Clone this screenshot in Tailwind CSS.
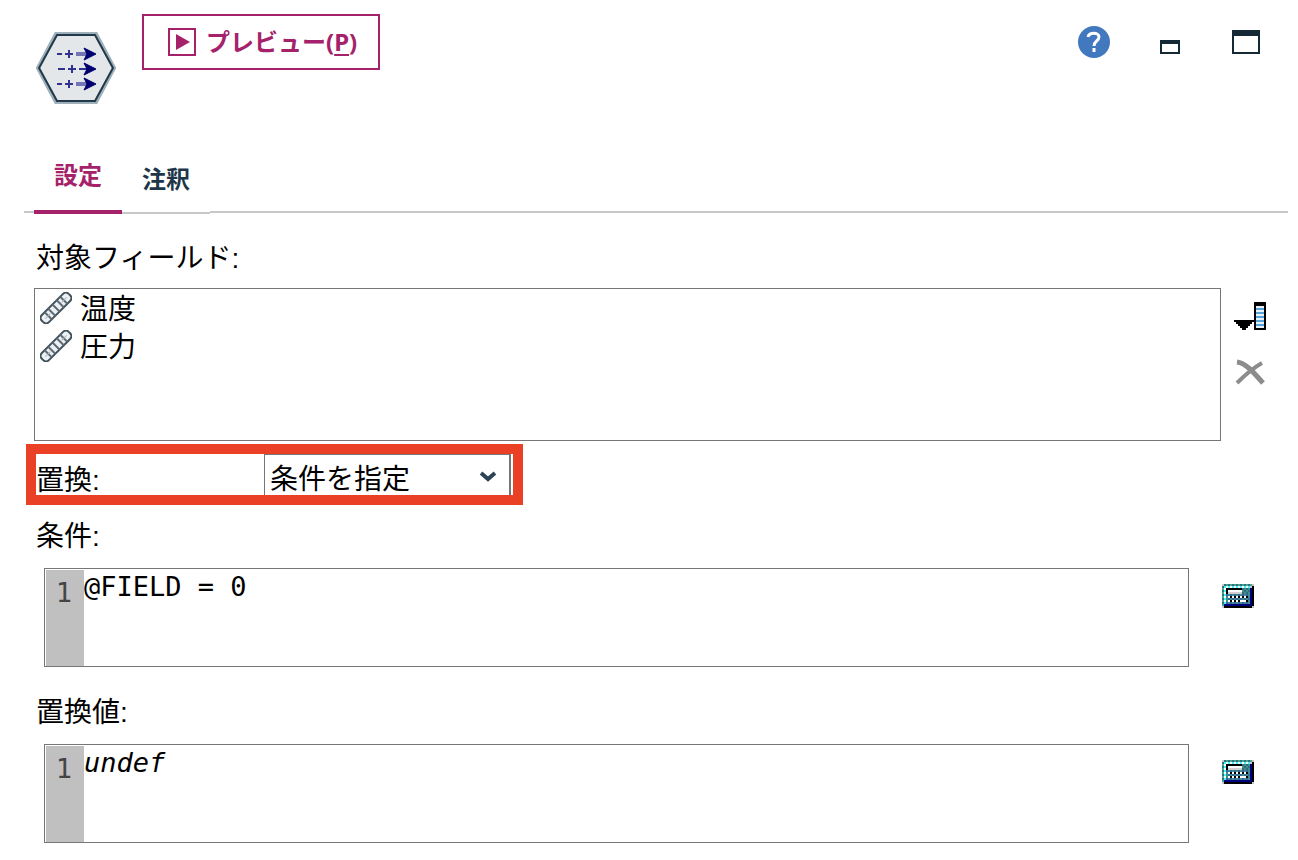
<!DOCTYPE html>
<html lang="ja">
<head>
  <meta charset="UTF-8">
  <meta name="viewport" content="width=device-width, initial-scale=1.0">
  <title>置換</title>
  <script src="https://cdn.jsdelivr.net/npm/@tailwindcss/browser@4"></script>
</head>
<body class="min-h-screen bg-white text-black text-[28px] leading-[38px] font-['Liberation_Sans','Noto_Sans_CJK_JP',sans-serif]">

  <!-- Shared icons -->
  <svg class="hidden">
    <symbol id="chain" viewBox="0 0 32 32">
      <g fill="none" stroke="#42525d" stroke-width="2" transform="rotate(-45 16 16)">
        <rect x="-3" y="11" width="38" height="10" rx="4" fill="#eef1f3" />
        <path d="M5 11v10M10 11v10M16 11v10M22 11v10M27 11v10" stroke="#5d6b75" />
        <path d="M1 16h7M24 16h7" stroke="#a9b3ba" stroke-width="1" />
      </g>
    </symbol>
    <symbol id="calculator" viewBox="0 0 16 12">
      <g shape-rendering="crispEdges">
        <rect width="16" height="12" fill="#c8c8cc" />
        <rect x="1" width="14" height="1" fill="#2f7474" />
        <rect y="1" width="1" height="10" fill="#2f7474" />
        <path d="M2 .5h13M.5 2v9" stroke="#4aa39b" stroke-dasharray="1 1" />
        <rect x="1" y="1" width="13" height="10" fill="#3f8f86" />
        <path d="M1 1.5h13M1.5 1v9" stroke="#3ff5f5" fill="none" />
        <path d="M2 1.5h12M1.5 2v8" stroke="#fff" stroke-dasharray="1 1" fill="none" />
        <rect x="2" y="2" width="8" height="3" fill="#000" />
        <rect x="3" y="3" width="7" height="1" fill="#fff" />
        <rect x="3" y="4" width="7" height="1" fill="#d0d0d0" />
        <path d="M10 2.5h4M11 3.5h3M10 4.5h4" stroke="#2e6c80" stroke-dasharray="1 1" />
        <path d="M2 5.5h12M3 7.5h11M2 9.5h12" stroke="#3a64a0" stroke-dasharray="1 1" />
        <path d="M3 6.5h10M3 8.5h10" stroke="#000" />
        <path d="M3 6.5h10M3 8.5h7" stroke="#fff" stroke-dasharray="1 1" />
        <path d="M10 8.5h2" stroke="#fff" />
        <path d="M1 10.5h14M14.5 2v9" stroke="#000080" />
        <path d="M1 11.5h14M15.5 1v10" stroke="#000" />
      </g>
    </symbol>
  </svg>

  <!-- Header -->
  <header class="flex items-start pt-[14px] pl-9 pr-[38px]">
    <svg class="mt-[18px] w-20 h-[72px] shrink-0" viewBox="0 0 80 72">
      <path d="M20 2H60L78 36L60 70H20L2 36Z" fill="#e3e7ea" stroke="#9fb0ba" stroke-width="4" />
      <path d="M21 3H59L77 36L59 69H21L3 36Z" fill="none" stroke="#21394a" stroke-width="2" />
      <g stroke="#31318f" stroke-width="2">
        <path d="M21 22h5M29 22h8M33 18v8M21 52h5M29 52h8M33 48v8M22 37h7M32 37h8M36 33v8" />
        <path d="M40 22h12M40 52h12" stroke="#7375b5" stroke-width="4" />
        <path d="M43 37h8" />
      </g>
      <path d="M48 16L60 22L48 28L51 22ZM48 31L60 37L48 43L51 37ZM48 46L60 52L48 58L51 52Z" fill="#00006e" stroke="#00006e" />
    </svg>

    <button class="ml-[26px] h-14 pl-6 pr-[21px] flex items-center gap-[10px] border-2 border-[#a5226b] text-[#a5226b] text-2xl font-bold font-['Noto_Sans','Noto_Sans_CJK_JP',sans-serif] whitespace-nowrap">
      <svg class="size-7" viewBox="0 0 28 28">
        <rect x="1" y="1" width="26" height="26" fill="none" stroke="currentColor" stroke-width="2" />
        <path d="M8 6L22 14L8 22z" fill="currentColor" />
      </svg>
      <span>プレビュー(<span class="underline decoration-2 underline-offset-[3px]">P</span>)</span>
    </button>

    <div class="ml-auto mt-3 flex">
      <button aria-label="ヘルプ">
        <svg class="size-8" viewBox="0 0 32 32">
          <circle cx="16" cy="16" r="16" fill="#4178be" />
          <path d="M10 11C11 6 21 6 21 11C21 15 16 15 16 20M16 22v4" fill="none" stroke="#fff" stroke-width="3" />
        </svg>
      </button>
      <button class="ml-[50px]" aria-label="最小化">
        <svg class="w-5 h-8" viewBox="0 0 20 32" shape-rendering="crispEdges">
          <path d="M0 14h20v14H0zM2 18v8h16v-8z" fill="#152935" fill-rule="evenodd" />
        </svg>
      </button>
      <button class="ml-[52px]" aria-label="最大化">
        <svg class="w-7 h-8" viewBox="0 0 28 32" shape-rendering="crispEdges">
          <path d="M0 4h28v24H0zM2 10v16h24V10z" fill="#152935" fill-rule="evenodd" />
        </svg>
      </button>
    </div>
  </header>

  <!-- Tabs -->
  <div role="tablist" class="mt-11 ml-6 mr-[10px] h-[66px] flex items-end text-2xl font-bold">
    <span class="w-[10px] mb-px border-b-2 border-[#c8c8c8]"></span>
    <button role="tab" aria-selected="true" class="h-full px-5 pb-1.5 border-b-4 border-[#a5226b] text-[#a5226b]">設定</button>
    <button role="tab" aria-selected="false" class="h-full px-5 border-b-2 border-[#c8c8c8] text-[#1d3649]">注釈</button>
    <span class="flex-1 mb-px border-b-2 border-[#c8c8c8]"></span>
  </div>

  <main class="pt-[26px]">
    <!-- Target fields -->
    <h2 id="fields-label" class="ml-9">対象フィールド:</h2>
    <div class="mt-[10px] pl-[34px] pr-8 flex gap-[13px]">
      <ul aria-labelledby="fields-label" class="flex-1 h-[153px] pt-[2px] pl-[5px] border border-[#767676]">
        <li class="flex items-center gap-2"><svg class="size-8 mb-1"><use href="#chain" /></svg>温度</li>
        <li class="flex items-center gap-2"><svg class="size-8 mb-1"><use href="#chain" /></svg>圧力</li>
      </ul>
      <div class="pt-[14px] flex flex-col gap-7">
        <button aria-label="フィールドを選択">
          <svg class="w-8 h-7" viewBox="0 0 32 28" shape-rendering="crispEdges">
            <path d="M20 0h12v28H20z" />
            <path d="M22 4h8v22h-8z" fill="#e6f3fb" />
            <path d="M22 7h8M22 11h8M22 15h8M22 19h8M22 23h8" stroke="#56a3d8" stroke-width="2" />
            <path d="M0 18h20v2h-2v2h-2v2h-2v2h-2v2H8v-2H6v-2H4v-2H2v-2H0z" />
          </svg>
        </button>
        <button aria-label="削除">
          <svg class="w-8 h-7" viewBox="0 0 32 28">
            <path d="M3 4C12 5 20 15 29 25" fill="none" stroke="#8c8c8c" stroke-width="5" />
            <path d="M28 5C19 10 10 18 3 25" fill="none" stroke="#8c8c8c" stroke-width="4" />
          </svg>
        </button>
      </div>
    </div>

    <!-- Replace mode, highlighted -->
    <div class="mt-[3px] ml-[26px] w-fit h-[61px] flex border-[10px] border-[#ea4025]">
      <label for="replace" class="w-[228px] pt-2">置換:</label>
      <div class="relative mr-[2px]">
        <select id="replace" class="w-[247px] h-[41px] pt-[6px] pl-[5px] appearance-none border-t border-l border-r-2 border-[#767676] bg-white">
          <option>条件を指定</option>
        </select>
        <svg class="absolute right-[15px] top-[17px] w-4 h-[11px] pointer-events-none" viewBox="0 0 16 11">
          <path d="M1 2L8 8L15 2" fill="none" stroke="#2b4355" stroke-width="4" />
        </svg>
      </div>
    </div>

    <!-- Condition -->
    <label for="condition" class="block mt-[13px] ml-9">条件:</label>
    <div class="mt-3 pl-11 pr-11 flex items-start gap-[33px]">
      <div class="flex-1 h-[99px] flex border border-[#767676] pt-px pl-px font-['DejaVu_Sans_Mono',monospace] text-[27px] leading-8">
        <div class="w-[38px] pt-[7px] pr-3 bg-[#c0c0c0] text-[#444] text-right">1</div>
        <textarea id="condition" spellcheck="false" class="flex-1 pt-px resize-none outline-none">@FIELD = 0</textarea>
      </div>
      <button class="mt-4" aria-label="式ビルダー"><svg class="w-8 h-6"><use href="#calculator" /></svg></button>
    </div>

    <!-- Replacement value -->
    <label for="value" class="block mt-[27px] ml-9">置換値:</label>
    <div class="mt-3 pl-11 pr-11 flex items-start gap-[33px]">
      <div class="flex-1 h-[99px] flex border border-[#767676] pt-px pl-px font-['DejaVu_Sans_Mono',monospace] text-[27px] leading-8">
        <div class="w-[38px] pt-[7px] pr-3 bg-[#c0c0c0] text-[#444] text-right">1</div>
        <textarea id="value" spellcheck="false" class="flex-1 pt-px resize-none outline-none italic">undef</textarea>
      </div>
      <button class="mt-4" aria-label="式ビルダー"><svg class="w-8 h-6"><use href="#calculator" /></svg></button>
    </div>
  </main>

</body>
</html>
